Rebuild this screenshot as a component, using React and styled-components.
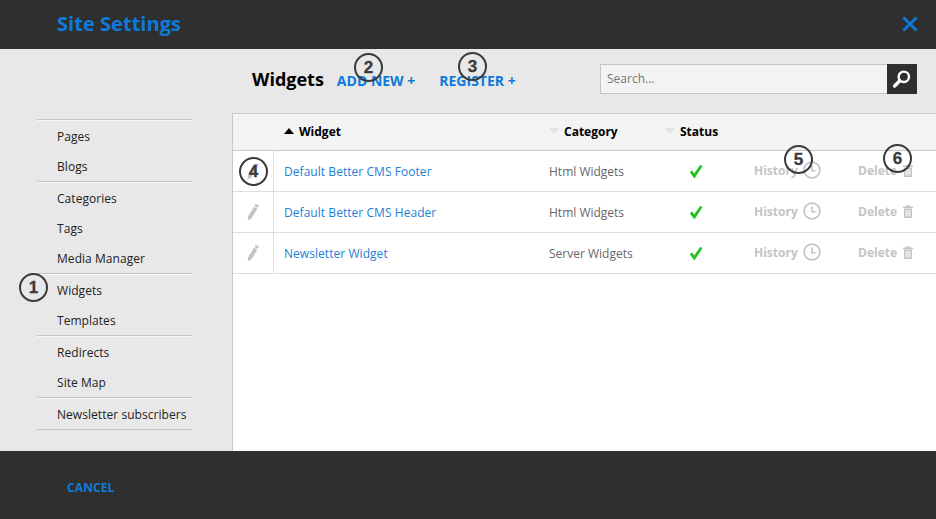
import React from "react";
import styled, { createGlobalStyle } from "styled-components";

const BLUE = "#0d7bdc";
const DARK = "#2f2f2f";

const navGroups = [
  ["Pages", "Blogs"],
  ["Categories", "Tags", "Media Manager"],
  ["Widgets", "Templates"],
  ["Redirects", "Site Map"],
  ["Newsletter subscribers"],
];

const rows = [
  { name: "Default Better CMS Footer", category: "Html Widgets" },
  { name: "Default Better CMS Header", category: "Html Widgets" },
  { name: "Newsletter Widget", category: "Server Widgets" },
];

const markers = [
  { n: 1, x: 19, y: 273 },
  { n: 2, x: 354, y: 53 },
  { n: 3, x: 458, y: 52 },
  { n: 4, x: 239, y: 157 },
  { n: 5, x: 784, y: 145 },
  { n: 6, x: 883, y: 144 },
];

const App = () => {
  return (
    <Page>
      <GlobalStyle />
      <Header>
        <Title>Site Settings</Title>
        <CloseButton>
          <svg width="16" height="16" viewBox="0 0 16 16">
            <path d="M1.5 1.5L14.5 14.5M14.5 1.5L1.5 14.5" stroke={BLUE} strokeWidth="2.8" fill="none" />
          </svg>
        </CloseButton>
      </Header>

      <Body>
        <Sidebar>
          {navGroups.map((group, i) => (
            <NavGroup key={i} $last={i === navGroups.length - 1}>
              {group.map((item) => (
                <NavItem key={item}>{item}</NavItem>
              ))}
            </NavGroup>
          ))}
        </Sidebar>

        <Main>
          <Toolbar>
            <Heading>Widgets</Heading>
            <ActionLink>ADD NEW +</ActionLink>
            <ActionLink $wide>REGISTER +</ActionLink>
            <Search>
              <SearchInput placeholder="Search..." />
              <SearchButton>
                <svg width="20" height="20" viewBox="0 0 20 20">
                  <circle cx="11.8" cy="7.8" r="5.2" fill="none" stroke="#fff" strokeWidth="2.4" />
                  <path d="M7.8 11.8L2.6 17" stroke="#fff" strokeWidth="3.4" strokeLinecap="round" />
                </svg>
              </SearchButton>
            </Search>
          </Toolbar>

          <Table>
            <HeadRow>
              <HeadCell $w={40} />
              <HeadCell $w={276} $pad={11}>
                <SortArrow $active />
                Widget
              </HeadCell>
              <HeadCell $w={116} $pad={15}>
                <SortArrow />
                Category
              </HeadCell>
              <HeadCell $pad={15}>
                <SortArrow />
                Status
              </HeadCell>
            </HeadRow>
            {rows.map((row) => (
              <Row key={row.name}>
                <EditCell>
                  <svg width="14" height="18" viewBox="0 0 14 18">
                    <path d="M9.6 0.8L13 2.6L11.9 4.7L8.5 2.9Z" fill="#c4c4c4" />
                    <path d="M8 3.8L11.4 5.6L5.4 15.4L1.8 17.3L2 13.4Z" fill="#c4c4c4" />
                  </svg>
                </EditCell>
                <NameCell>{row.name}</NameCell>
                <CategoryCell>{row.category}</CategoryCell>
                <StatusCell>
                  <svg width="14" height="15" viewBox="0 0 14 15">
                    <path d="M0.8 8.2L3.2 6.6L5.2 9.6L11.4 0.8L13.4 2.2L5.4 14.4Z" fill="#21c21b" />
                  </svg>
                </StatusCell>
                <HistoryCell>
                  History
                  <svg width="18" height="18" viewBox="0 0 18 18">
                    <circle cx="9" cy="9" r="7.9" fill="none" stroke="#c4c4c4" strokeWidth="1.6" />
                    <path d="M9 4.5V9.8H12.6" fill="none" stroke="#c4c4c4" strokeWidth="1.6" />
                  </svg>
                </HistoryCell>
                <DeleteCell>
                  Delete
                  <svg width="10" height="13" viewBox="0 0 10 13">
                    <path d="M0 1.6H3V0.4H7V1.6H10V3H0Z" fill="#c4c4c4" />
                    <path d="M1 3.6H9V13H1ZM2.6 5V11.6H3.6V5ZM4.5 5V11.6H5.5V5ZM6.4 5V11.6H7.4V5Z" fill="#c4c4c4" fillRule="evenodd" />
                  </svg>
                </DeleteCell>
              </Row>
            ))}
          </Table>
        </Main>
      </Body>

      <Footer>
        <CancelLink>CANCEL</CancelLink>
      </Footer>

      {markers.map((m) => (
        <Marker key={m.n} $x={m.x} $y={m.y}>
          {m.n}
        </Marker>
      ))}
    </Page>
  );
};

export default App;

const GlobalStyle = createGlobalStyle`
  html, body {
    margin: 0;
    padding: 0;
    background: #e8e8e8;
  }
  * {
    box-sizing: border-box;
  }
`;

const Page = styled.div`
  position: relative;
  display: flex;
  flex-direction: column;
  width: 936px;
  height: 519px;
  overflow: hidden;
  font-family: "Open Sans", Arial, sans-serif;
`;

const Header = styled.header`
  display: flex;
  align-items: center;
  justify-content: space-between;
  height: 49px;
  padding: 0 18px 2px 57px;
  background: ${DARK};
`;

const Title = styled.h1`
  margin: 0;
  color: ${BLUE};
  font-size: 20px;
  font-weight: 700;
  letter-spacing: 0.04px;
`;

const CloseButton = styled.div`
  display: flex;
`;

const Body = styled.div`
  display: flex;
  flex: 1;
  min-height: 0;
  background: #e8e8e8;
`;

const Sidebar = styled.nav`
  width: 232px;
  padding: 70px 40px 0 37px;
  flex-shrink: 0;
`;

const NavGroup = styled.div`
  border-top: 1px solid #c4c4c4;
  padding-top: 1px;
  box-shadow: inset 0 1px 0 #f7f7f7;
  ${(p) => p.$last && "border-bottom: 1px solid #c4c4c4; height: 33px;"}
`;

const NavItem = styled.div`
  height: 30px;
  padding-left: 20px;
  color: #222;
  font-size: 12px;
  line-height: 31px;
  letter-spacing: 0.05px;
  white-space: nowrap;
`;

const Main = styled.main`
  display: flex;
  flex: 1;
  flex-direction: column;
  min-width: 0;
`;

const Toolbar = styled.div`
  display: flex;
  align-items: center;
  height: 64px;
  padding: 0 19px 2px 20px;
`;

const Heading = styled.h2`
  margin: 0 13px 3px 0;
  color: #000;
  font-size: 18px;
  font-weight: 700;
`;

const ActionLink = styled.a`
  margin: 0 0 0 ${(p) => (p.$wide ? "24px" : "0")};
  color: ${BLUE};
  font-size: 14px;
  font-weight: 700;
`;

const Search = styled.div`
  display: flex;
  margin-left: auto;
  margin-bottom: 3px;
`;

const SearchInput = styled.input`
  width: 287px;
  height: 30px;
  padding: 0 6px;
  border: 1px solid #c4c4c4;
  border-right: 0;
  outline: none;
  background: #f3f3f3;
  color: #444;
  font-family: inherit;
  font-size: 12px;

  &::placeholder {
    color: #777;
    opacity: 1;
  }
`;

const SearchButton = styled.div`
  display: flex;
  align-items: center;
  justify-content: center;
  width: 30px;
  height: 30px;
  background: ${DARK};
`;

const Table = styled.section`
  flex: 1;
  border-top: 1px solid #c8c8c8;
  border-left: 1px solid #c8c8c8;
  background: #fff;
`;

const HeadRow = styled.div`
  display: flex;
  height: 37px;
  border-bottom: 1px solid #c8c8c8;
  background: #f3f3f3;
`;

const HeadCell = styled.div`
  display: flex;
  align-items: center;
  ${(p) => p.$w && `width: ${p.$w}px;`}
  padding-left: ${(p) => p.$pad || 0}px;
  padding-bottom: 2px;
  color: #000;
  font-size: 12px;
  font-weight: 700;
`;

const SortArrow = styled.i`
  width: 0;
  height: 0;
  margin-right: 5px;
  margin-top: -1px;
  border-left: 5px solid transparent;
  border-right: 5px solid transparent;
  ${(p) =>
    p.$active
      ? "border-bottom: 6px solid #000;"
      : "border-top: 6px solid #e2e2e2; margin-left: -15px; margin-right: 5px;"}
`;

const Row = styled.div`
  display: flex;
  align-items: center;
  height: 41px;
  border-bottom: 1px solid #dedede;
  font-size: 12px;
`;

const EditCell = styled.div`
  display: flex;
  align-items: center;
  justify-content: center;
  width: 41px;
  height: 100%;
  border-right: 1px solid #dedede;
`;

const NameCell = styled.a`
  width: 275px;
  padding-left: 10px;
  color: #1c7fd6;
  letter-spacing: 0.05px;
`;

const CategoryCell = styled.div`
  width: 131px;
  color: #666;
`;

const StatusCell = styled.div`
  display: flex;
  width: 74px;
  padding-left: 9px;
`;

const MutedAction = styled.div`
  display: flex;
  align-items: center;
  margin-bottom: 2px;
  color: #c4c4c4;
  font-weight: 700;
`;

const HistoryCell = styled(MutedAction)`
  width: 104px;
  gap: 5px;
`;

const DeleteCell = styled(MutedAction)`
  gap: 6px;
`;

const Footer = styled.footer`
  display: flex;
  align-items: center;
  height: 68px;
  padding: 5px 0 0 67px;
  background: ${DARK};
`;

const CancelLink = styled.a`
  color: ${BLUE};
  font-size: 12px;
  font-weight: 700;
  letter-spacing: 0.1px;
`;

// numbered callouts drawn over the screenshot
const Marker = styled.div`
  position: absolute;
  left: ${(p) => p.$x}px;
  top: ${(p) => p.$y}px;
  display: flex;
  align-items: center;
  justify-content: center;
  width: 29px;
  height: 29px;
  border: 2px solid #3a3a3a;
  border-radius: 50%;
  color: #3a3a3a;
  font-family: "Liberation Sans", Arial, sans-serif;
  font-size: 17px;
  font-weight: 700;
  -webkit-text-stroke: 0.3px #3a3a3a;
`;
